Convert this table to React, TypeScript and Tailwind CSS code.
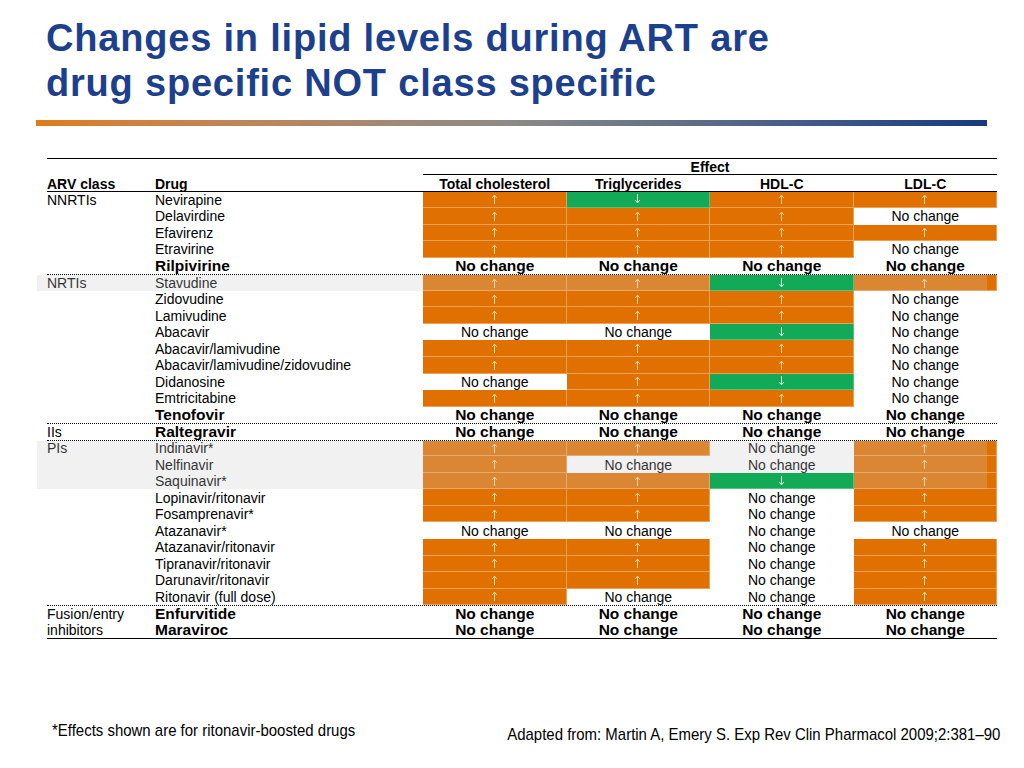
import React from "react";

type Val = "u" | "d" | "n";

interface DrugRow {
  cls?: string;
  drug: string;
  bold?: boolean;
  vals: Val[];
  shade?: boolean;
  sep?: boolean;
}

const v = (s: string) => s.split("") as Val[];

const rows: DrugRow[] = [
  { cls: "NNRTIs", drug: "Nevirapine", vals: v("uduu") },
  { drug: "Delavirdine", vals: v("uuun") },
  { drug: "Efavirenz", vals: v("uuuu") },
  { drug: "Etravirine", vals: v("uuun") },
  { drug: "Rilpivirine", bold: true, vals: v("nnnn") },
  { cls: "NRTIs", drug: "Stavudine", vals: v("uudu"), shade: true, sep: true },
  { drug: "Zidovudine", vals: v("uuun") },
  { drug: "Lamivudine", vals: v("uuun") },
  { drug: "Abacavir", vals: v("nndn") },
  { drug: "Abacavir/lamivudine", vals: v("uuun") },
  { drug: "Abacavir/lamivudine/zidovudine", vals: v("uuun") },
  { drug: "Didanosine", vals: v("nudn") },
  { drug: "Emtricitabine", vals: v("uuun") },
  { drug: "Tenofovir", bold: true, vals: v("nnnn") },
  { cls: "IIs", drug: "Raltegravir", bold: true, vals: v("nnnn"), sep: true },
  { cls: "PIs", drug: "Indinavir*", vals: v("uunu"), shade: true, sep: true },
  { drug: "Nelfinavir", vals: v("unnu"), shade: true },
  { drug: "Saquinavir*", vals: v("uudu"), shade: true },
  { drug: "Lopinavir/ritonavir", vals: v("uunu") },
  { drug: "Fosamprenavir*", vals: v("uunu") },
  { drug: "Atazanavir*", vals: v("nnnn") },
  { drug: "Atazanavir/ritonavir", vals: v("uunu") },
  { drug: "Tipranavir/ritonavir", vals: v("uunu") },
  { drug: "Darunavir/ritonavir", vals: v("uunu") },
  { drug: "Ritonavir (full dose)", vals: v("unnu") },
  { cls: "Fusion/entry", drug: "Enfurvitide", bold: true, vals: v("nnnn"), sep: true },
  { cls: "inhibitors", drug: "Maraviroc", bold: true, vals: v("nnnn") },
];

const cols = "grid grid-cols-[108px_268px_143.5px_143.5px_143.5px_143.5px]";

function Arrow({ down }: { down?: boolean }) {
  return (
    <svg
      width="7"
      height="10"
      viewBox="0 0 7 10"
      className={down ? "rotate-180" : ""}
      fill="none"
      stroke={down ? "#d8f5e2" : "#ffd9a3"}
      strokeWidth="1"
    >
      <path d="M3.5 10V1.2M1.3 3.8L3.5 1.1L5.7 3.8" />
    </svg>
  );
}

function Cell({ val, bold }: { val: Val; bold?: boolean }) {
  if (val === "u") {
    return (
      <div className="flex items-center justify-center bg-[#e07000] border-r border-b border-[#eea055]">
        <Arrow />
      </div>
    );
  }
  if (val === "d") {
    return (
      <div className="relative z-10 flex items-center justify-center bg-[#12aa56] border-r border-b border-[#52c283]">
        <Arrow down />
      </div>
    );
  }
  return (
    <div
      className={
        bold
          ? "flex items-center justify-center text-[15.5px] font-bold"
          : "flex items-center justify-center text-[14px]"
      }
    >
      No change
    </div>
  );
}

function Row({ row }: { row: DrugRow }) {
  return (
    <div
      className={`${cols} relative h-[16.55px] leading-none ${
        row.sep ? "border-t border-dotted border-black" : ""
      }`}
    >
      <div className="flex items-center text-[14px]">{row.cls}</div>
      <div className={row.bold ? "flex items-center text-[15.5px] font-bold" : "flex items-center text-[14px]"}>
        {row.drug}
      </div>
      {row.vals.map((val, i) => (
        <Cell key={i} val={val} bold={row.bold} />
      ))}
      {row.shade && (
        <div className="pointer-events-none absolute top-0 bottom-0 left-[-10px] right-[10px] bg-[#c8c8c8]/25" />
      )}
    </div>
  );
}

export default function App() {
  return (
    <div className="w-[1024px] h-[768px] bg-white font-['Liberation_Sans',Arial,sans-serif] text-black overflow-hidden">
      <h1 className="pt-[16px] pl-[46px] text-[38px] leading-[45px] tracking-[0.8px] font-bold text-[#1c3f8e]">
        Changes in lipid levels during ART are
        <br />
        drug specific NOT class specific
      </h1>

      <div className="mt-[14px] ml-[36px] w-[951px] h-[6px] bg-gradient-to-r from-[#df7c16] via-[#8c8a88] to-[#163a80]" />

      <div className="mt-[32px] ml-[47px] w-[950px]">
        <div className="border-t-[1.5px] border-black">
          <div className={`${cols} h-[16px] leading-none`}>
            <div className="col-span-2" />
            <div className="col-span-4 flex items-center justify-center text-[14px] font-bold border-b border-black">
              Effect
            </div>
          </div>
          <div className={`${cols} h-[16.5px] pt-[2px] text-[14px] font-bold border-b-[1.5px] border-black leading-none`}>
            <div className="flex items-center">ARV class</div>
            <div className="flex items-center">Drug</div>
            <div className="flex items-center justify-center">Total cholesterol</div>
            <div className="flex items-center justify-center">Triglycerides</div>
            <div className="flex items-center justify-center">HDL-C</div>
            <div className="flex items-center justify-center">LDL-C</div>
          </div>
        </div>
        {rows.map((row) => (
          <Row key={row.drug} row={row} />
        ))}
        <div className="border-t-[1.5px] border-black" />
      </div>

      <div className="mt-[82px] flex justify-between pl-[52px] pr-[24px] whitespace-nowrap text-[17px] leading-[20px]">
        <p className="origin-left scale-x-[0.88]">*Effects shown are for ritonavir-boosted drugs</p>
        <p className="pt-[4px] origin-right scale-x-[0.88]">
          Adapted from: Martin A, Emery S. Exp Rev Clin Pharmacol 2009;2:381–90
        </p>
      </div>
    </div>
  );
}
